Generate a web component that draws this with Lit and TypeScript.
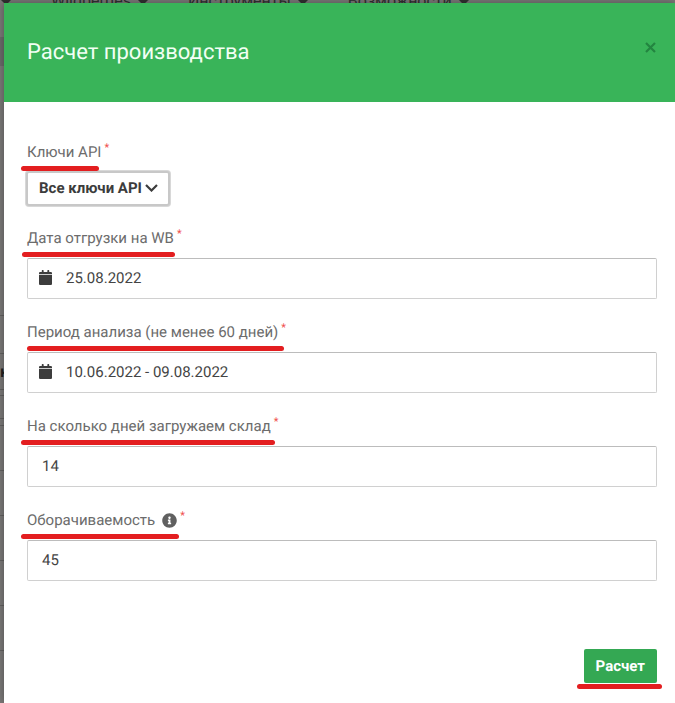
import { LitElement, html, svg, css, nothing } from "lit";
import { customElement, property } from "lit/decorators.js";
import { styleMap } from "lit/directives/style-map.js";

const calendarIcon = html`<svg class="calendar" viewBox="0 0 14 16" aria-hidden="true">
  ${svg`<path d="M1.200 2H3V.5Q3 0 3.500 0h1Q5 0 5 .5V2h4V.5Q9 0 9.500 0h1q.5 0 .5.5V2h1.800Q14 2 14 3.200V4.600H0V3.200Q0 2 1.200 2Z"/><path d="M0 5.400h14v9.200Q14 16 12.800 16H1.200Q0 16 0 14.600Z"/>`}
</svg>`;

const infoIcon = html`<svg class="info" viewBox="0 0 512 512" role="img" aria-label="Подсказка">
  <path d="M256 8C119 8 8 119 8 256s111 248 248 248 248-111 248-248S393 8 256 8zm0 110c23 0 42 19 42 42s-19 42-42 42-42-19-42-42 19-42 42-42zm56 254c0 7-5 12-12 12h-88c-7 0-12-5-12-12v-24c0-7 5-12 12-12h12v-64h-12c-7 0-12-5-12-12v-24c0-7 5-12 12-12h64c7 0 12 5 12 12v100h12c7 0 12 5 12 12v24z"/>
</svg>`;

@customElement("form-field")
class FormField extends LitElement {
  @property() label = "";
  @property() value = "";
  @property() kind: "text" | "date" | "select" = "text";
  @property({ type: Boolean }) hint = false;
  @property({ type: Number }) markStart = 0;
  @property({ type: Number }) markLength = 0;

  static styles = css`
    :host { display: block; }
    * { box-sizing: border-box; }
    .label-row { position: relative; display: flex; height: 20px; margin-bottom: 10px; }
    label { color: #6c6c6c; line-height: 20px; display: flex; align-items: center; }
    .star { color: #f0524f; font-size: 11px; line-height: 11px; align-self: flex-start; margin-left: 3px; }
    .mark { position: absolute; z-index: 1; top: 24px; height: 5px; border-radius: 3px; background: #e31e20; pointer-events: none; }
    .box { position: relative; display: flex; align-items: center; }
    input { width: 100%; height: 41px; padding: 0 14px 2px; border: 1px solid #d0d0d0; border-top-color: #bcbcbc; border-radius: 2px; background: #fff; color: #444; font: inherit; text-rendering: inherit; outline: none; }
    .date input { padding-left: 38px; }
    .calendar { position: absolute; left: 12px; top: 12px; width: 13px; height: 15px; fill: #3c3c3c; }
    .info { width: 15px; height: 15px; margin-left: 7px; fill: #606060; }
    .select { width: fit-content; margin: -1px 0; }
    select { appearance: none; height: 35px; margin-left: -1px; padding: 0 25px 2px 11px; border: 2px solid #c8c8c8; border-radius: 3px; background: #fff; box-shadow: 0 0 0 1px #d8d8d8; color: #3c3c3c; font: inherit; font-weight: 700; text-rendering: inherit; outline: none; }
    .chevron { position: absolute; right: 12px; top: 13px; width: 13px; height: 8px; fill: none; stroke: #3c3c3c; stroke-width: 2.2; pointer-events: none; }
  `;

  control() {
    if (this.kind === "select") {
      return html`<div class="box select">
        <select id="control"><option>${this.value}</option></select>
        <svg class="chevron" viewBox="0 0 13 8" aria-hidden="true"><path d="M1 1l5.500 5.500L12 1"/></svg>
      </div>`;
    }
    return html`<div class="box ${this.kind}">
      ${this.kind === "date" ? calendarIcon : nothing}
      <input id="control" type="text" .value=${this.value} />
    </div>`;
  }

  render() {
    const mark = { left: `${this.markStart}px`, width: `${this.markLength}px` };
    return html`<div class="label-row">
        <label for="control">${this.label}${this.hint ? infoIcon : nothing}<span class="star">*</span></label>
        <span class="mark" style=${styleMap(mark)}></span>
      </div>
      ${this.control()}`;
  }
}

const fields = [
  { label: "Ключи API", value: "Все ключи API", kind: "select", hint: false, start: -6, length: 78 },
  { label: "Дата отгрузки на WB", value: "25.08.2022", kind: "date", hint: false, start: -5, length: 153 },
  { label: "Период анализа (не менее 60 дней)", value: "10.06.2022 - 09.08.2022", kind: "date", hint: false, start: 0, length: 257 },
  { label: "На сколько дней загружаем склад", value: "14", kind: "text", hint: false, start: -6, length: 254 },
  { label: "Оборачиваемость", value: "45", kind: "text", hint: true, start: -6, length: 158 },
];

@customElement("app-root")
class AppRoot extends LitElement {
  static styles = css`
    :host { position: relative; display: block; min-height: 100vh; overflow: hidden; background: #7b7978; font: 15px/20px Roboto, sans-serif; text-rendering: geometricPrecision; }
    * { box-sizing: border-box; }
    .behind { position: absolute; inset: 0; overflow: hidden; color: #303030; font-size: 16px; }
    .menu { display: flex; gap: 57px; margin: -9px 0 0 51px; white-space: nowrap; line-height: 20px; }
    .menu span { position: relative; }
    .menu span::after, .first::before { content: ""; position: absolute; top: 8px; right: -18px; border: 6px solid transparent; border-top-color: #303030; border-bottom: 0; }
    .first::before { right: auto; left: -51px; }
    .band { height: 29px; margin-top: 26px; background: #6b6b6b; }
    .rows { display: grid; grid-template-rows: 38px 36px 6px 23px 7px; grid-auto-rows: 45px; width: 4px; margin-top: 249px; }
    .rows span { border-top: 1px solid #626160; line-height: 36px; font-weight: 700; direction: rtl; color: #222; }
    .dialog { position: relative; margin: 3px 0 0 4px; min-height: calc(100vh - 3px); background: #fff; box-shadow: 0 0 8px rgba(0, 0, 0, 0.35); }
    header { display: flex; align-items: center; justify-content: space-between; height: 99px; padding: 0 18px 0 23px; background: #39b459; }
    h1 { margin: 0; color: #f2fff4; font-size: 22px; line-height: 30px; font-weight: 400; }
    .close { display: flex; margin-bottom: 10px; padding: 0; border: 0; background: none; }
    .close svg { width: 13px; height: 13px; fill: none; stroke: #238540; stroke-width: 2.2; }
    form { display: flex; flex-direction: column; gap: 23px; padding: 40px 18px 16px 23px; }
    .actions { display: flex; justify-content: flex-end; margin-top: 45px; }
    .submit { position: relative; height: 34px; padding: 0 12px; border: 0; border-radius: 2px; background: #34a853; color: #fff; font: 700 15px/32px Roboto, sans-serif; text-rendering: inherit; }
    .submit::after { content: ""; position: absolute; left: -7px; right: -5px; bottom: -6px; height: 5px; border-radius: 3px; background: #e31e20; }
  `;

  render() {
    return html`<div class="behind" aria-hidden="true">
        <div class="menu"><span class="first">Wildberries</span><span>Инструменты</span><span>Возможности</span></div>
        <div class="band"></div>
        <div class="rows"><span></span><span>к</span><span></span><span></span><span></span><span></span><span></span><span></span><span></span><span></span><span></span></div>
      </div>
      <section class="dialog" role="dialog" aria-labelledby="title">
        <header>
          <h1 id="title">Расчет производства</h1>
          <button class="close" aria-label="Закрыть"><svg viewBox="0 0 13 13"><path d="M2 2l9 9M11 2l-9 9"/></svg></button>
        </header>
        <form @submit=${(e: Event) => e.preventDefault()}>
          ${fields.map((f) => html`<form-field .label=${f.label} .value=${f.value} .kind=${f.kind as any}
            .hint=${f.hint} .markStart=${f.start} .markLength=${f.length}></form-field>`)}
          <div class="actions"><button class="submit">Расчет</button></div>
        </form>
      </section>`;
  }
}
